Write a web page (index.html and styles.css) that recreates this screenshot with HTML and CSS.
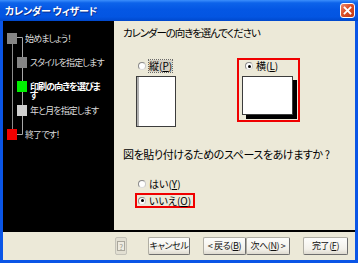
FILE: index.html
```html
<!DOCTYPE html>
<html lang="ja">
<head>
<meta charset="utf-8">
<link rel="stylesheet" href="styles.css">
</head>
<body>
<div class="window">
  <div class="titlebar">
    <span class="title">カレンダー ウィザード</span>
    <span class="close"><svg width="9" height="9" viewBox="0 0 9 9"><path d="M1.5 1.5L7.5 7.5M7.5 1.5L1.5 7.5" stroke="#fff" stroke-width="1.8" stroke-linecap="square"/></svg></span>
  </div>
  <div class="frame">
    <div class="main">
      <div class="sidebar">
        <svg class="tree" width="111" height="209" viewBox="0 0 111 209">
          <path d="M9.5 23V108" stroke="#8c8c8c" fill="none"/>
          <path d="M14 16.5H19.5V113.5H14" stroke="#a8a8a8" fill="none"/>
        </svg>
        <div class="steps">
          <div class="step outer"><span class="mk gray"></span><span class="lbl">始めましょう！</span></div>
          <div class="step inner"><span class="mk gray"></span><span class="lbl">スタイルを指定します</span></div>
          <div class="step inner"><span class="mk green"></span><span class="lbl cur">印刷の向きを選びます</span></div>
          <div class="step inner"><span class="mk light"></span><span class="lbl">年と月を指定します</span></div>
          <div class="step outer"><span class="mk red"></span><span class="lbl">終了です！</span></div>
        </div>
      </div>
      <div class="content">
        <div class="h h1">カレンダーの向きを選んでください</div>
        <div class="orient">
          <div class="opt portrait">
            <label class="radio"><span class="dot"></span><span class="focus">縦(<u>P</u>)</span></label>
            <div class="page tall"></div>
          </div>
          <div class="opt landscape">
            <label class="radio"><span class="dot on"></span><span>横(<u>L</u>)</span></label>
            <div class="page wide"></div>
          </div>
        </div>
        <div class="h h2">図を貼り付けるためのスペースをあけますか ?</div>
        <div class="yn">
          <label class="radio box"><span class="dot"></span><span>はい(<u>Y</u>)</span></label>
          <label class="radio box sel"><span class="dot on"></span><span>いいえ(<u>O</u>)</span></label>
        </div>
      </div>
    </div>
    <div class="footer">
      <span class="btn help"><span class="q">?</span></span>
      <span class="btn cancel">キャンセル</span>
      <span class="btn back">&lt; 戻る(<u>B</u>)</span>
      <span class="btn next">次へ(<u>N</u>) &gt;</span>
      <span class="btn finish">完了(<u>F</u>)</span>
    </div>
  </div>
</div>
</body>
</html>
```

FILE: styles.css
```css
* { box-sizing: border-box; }
body {
  margin: 0;
  font-family: "Noto Sans CJK JP", "Noto Sans", sans-serif;
  font-feature-settings: "palt";
  color: #000;
}
.window {
  width: 358px;
  height: 263px;
  display: flex;
  flex-direction: column;
  overflow: hidden;
  background: #0a55e6;
}
.titlebar {
  height: 21px;
  flex: none;
  display: flex;
  align-items: center;
  justify-content: space-between;
  padding: 0 3px 0 5px;
  background: linear-gradient(180deg, #3c8ffc 0%, #0d63ea 14%, #0457e4 45%, #0355e2 80%, #0048cc 100%);
}
.title {
  color: #fff;
  font-size: 10px;
  font-weight: bold;
  line-height: 12px;
  letter-spacing: -0.3px;
  text-shadow: 1px 1px 0 #0b2c8c;
}
.close {
  width: 15px;
  height: 15px;
  border: 1px solid #fff;
  border-radius: 3px;
  background: linear-gradient(135deg, #ef8a6c 0%, #dc4e27 45%, #c13a15 100%);
  display: flex;
  align-items: center;
  justify-content: center;
}
.frame {
  flex: 1;
  display: flex;
  flex-direction: column;
  border: 3px solid #0a55e6;
  border-top: 0;
  background: #ece9d8;
}
.main {
  height: 211px;
  flex: none;
  display: flex;
  border-bottom: 2px solid #000;
}
.sidebar {
  width: 111px;
  flex: none;
  background: #000;
  position: relative;
}
.tree {
  position: absolute;
  left: 0;
  top: 0;
}
.steps {
  position: relative;
  display: flex;
  flex-direction: column;
  gap: 13px;
  padding-top: 12px;
}
.step {
  height: 11px;
  display: flex;
  align-items: flex-start;
}
.mk {
  width: 10px;
  height: 11px;
  flex: none;
}
.outer .mk { margin-left: 4px; }
.outer .lbl { margin-left: 8px; }
.inner .mk { margin-left: 14px; }
.inner .lbl { margin-left: 3px; }
.gray { background: #858585; }
.green { background: #00f000; }
.light { background: #cfcfcf; }
.red { background: #f00000; }
.lbl {
  font-size: 9px;
  line-height: 9px;
  letter-spacing: -0.9px;
  margin-top: 1px;
  color: #dcdcdc;
  white-space: nowrap;
}
.lbl.cur {
  color: #fff;
  font-weight: bold;
  white-space: normal;
  width: 75px;
}
.content {
  flex: 1;
  padding: 5px 0 0 9px;
}
.h {
  font-size: 11px;
  line-height: 13px;
  color: #000;
  white-space: nowrap;
}
.h1 { font-size: 10.5px; letter-spacing: -1.1px; }
.h2 { margin-top: 21px; letter-spacing: -0.4px; }
.orient {
  margin-top: 19px;
  margin-left: 13px;
  display: flex;
  align-items: flex-start;
}
.radio {
  display: flex;
  align-items: center;
  gap: 3px;
  font-size: 10px;
  line-height: 12px;
  height: 12px;
  white-space: nowrap;
}
.dot {
  width: 8px;
  height: 8px;
  border-radius: 50%;
  border: 1px solid #9a9a9a;
  border-color: #8a8a8a #c8c8c8 #dcdcdc #8a8a8a;
  background: #fff;
  display: flex;
  align-items: center;
  justify-content: center;
  flex: none;
}
.dot.on::after {
  content: "";
  width: 3px;
  height: 3px;
  border-radius: 50%;
  background: #000;
}
.focus {
  outline: 1px dotted #6a6a6a;
  background: #d4d0c4;
}
.portrait {
  padding-top: 2px;
}
.portrait .radio { margin-left: 2px; }
.page {
  background: #fff;
  border: 1px solid #3c3c3c;
  margin-top: 4px;
}
.tall {
  width: 40px;
  height: 51px;
  box-shadow: inset 2px 0 0 #b0b0b0;
}
.landscape {
  margin-left: 61px;
  width: 63px;
  height: 64px;
  border: 2px solid #f00000;
  padding-left: 3px;
}
.landscape .radio { margin-left: 3px; }
.wide {
  width: 51px;
  height: 39px;
  box-shadow: 4px 4px 0 #000;
}
.yn {
  margin-top: 15px;
  margin-left: 12px;
  display: flex;
  flex-direction: column;
  align-items: flex-start;
  gap: 2px;
}
.radio.box {
  height: 15px;
  border: 2px solid transparent;
  padding: 0 2px 0 1px;
}
.radio.box.sel { border-color: #f00000; }
.footer {
  flex: 1;
  display: flex;
  align-items: flex-start;
  padding-top: 5px;
}
.btn {
  height: 18px;
  border: 1px solid #808080;
  border-color: #b0aea4 #6e6e6e #6e6e6e #b0aea4;
  border-radius: 2px;
  background: linear-gradient(180deg, #fdfdfb 0%, #f3f1ea 70%, #dedad0 100%);
  font-size: 9px;
  line-height: 16px;
  letter-spacing: -0.4px;
  white-space: nowrap;
  display: flex;
  align-items: center;
  justify-content: center;
  color: #111;
  flex: none;
}
.help {
  margin-left: 112px;
  width: 12px;
  border-color: #c4c2b8;
  background: #e2dfd2;
}
.q {
  font-size: 8px;
  line-height: 9px;
  width: 8px;
  height: 10px;
  border: 1px solid #aaa79c;
  color: #a09d92;
  display: flex;
  align-items: center;
  justify-content: center;
  background: #eeebe0;
}
.cancel { margin-left: 21px; width: 42px; }
.back { margin-left: 13px; width: 43px; }
.next { width: 44px; }
.finish { margin-left: 13px; width: 45px; }
```
